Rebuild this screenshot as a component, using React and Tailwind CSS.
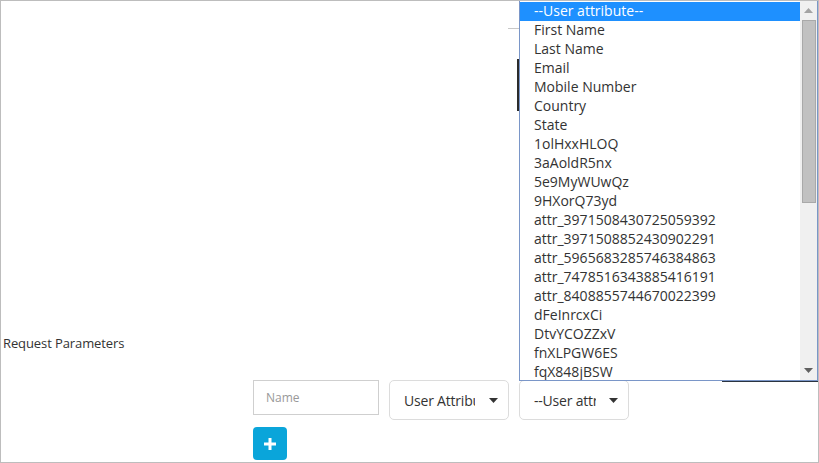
import React from "react";

const items = [
  "First Name",
  "Last Name",
  "Email",
  "Mobile Number",
  "Country",
  "State",
  "1olHxxHLOQ",
  "3aAoldR5nx",
  "5e9MyWUwQz",
  "9HXorQ73yd",
  "attr_3971508430725059392",
  "attr_3971508852430902291",
  "attr_5965683285746384863",
  "attr_7478516343885416191",
  "attr_8408855744670022399",
  "dFeInrcxCi",
  "DtvYCOZZxV",
  "fnXLPGW6ES",
  "fqX848jBSW",
  "gHk29LmQpe",
];

function Caret() {
  return (
    <svg width="9" height="5" viewBox="0 0 9 5" className="shrink-0">
      <path d="M0 0 L9 0 L4.5 5 Z" fill="#333" />
    </svg>
  );
}

export default function App() {
  return (
    <div
      className="relative w-[819px] h-[463px] border border-[#bdbdbd] bg-white overflow-hidden text-[#333]"
      style={{ fontFamily: '"Open Sans", "Noto Sans", sans-serif' }}
    >
      {/* hidden content behind dropdown */}
      <div className="absolute left-[516px] top-[58px] w-[300px] h-[52px] border-l-2 border-[#2b2b2b]" />
      <div className="absolute left-[721px] top-[379px] w-[96px] h-[2px] bg-[#2b3440]" />
      <div className="absolute left-[507px] top-[27px] w-[12px] h-px bg-[#c8c8c8]" />

      <div className="flex flex-col pt-[333px]">
        <div className="pl-[2px] text-[13px] leading-[18px] tracking-[-0.1px]">Request Parameters</div>
        <div className="flex items-start gap-[10px] pl-[252px] mt-[28px]">
          <div className="w-[126px] h-[35px] border border-[#cfcfcf] flex items-center pl-[12px] text-[12px] text-[#999]">
            Name
          </div>
          <div className="w-[120px] h-[40px] border border-[#dcdcdc] rounded-[5px] flex items-center pl-[14px] pr-[10px]">
            <span className="w-[71px] overflow-hidden whitespace-nowrap text-[14px] tracking-[-0.2px]">User Attribute</span>
            <span className="flex-1" />
            <Caret />
          </div>
          <div className="w-[110px] h-[40px] border border-[#dcdcdc] rounded-[5px] flex items-center pl-[14px] pr-[10px]">
            <span className="w-[62px] overflow-hidden whitespace-nowrap text-[14px] tracking-[-0.2px]">--User attribute--</span>
            <span className="flex-1" />
            <Caret />
          </div>
        </div>
        <div className="pl-[252px] mt-[7px]">
          <div className="w-[34px] h-[33px] rounded-[4px] bg-[#0aa5da] flex items-center justify-center">
            <svg width="12" height="12" viewBox="0 0 12 12">
              <path d="M4.5 0 H7.5 V4.5 H12 V7.5 H7.5 V12 H4.5 V7.5 H0 V4.5 H4.5 Z" fill="#fff" />
            </svg>
          </div>
        </div>
      </div>

      {/* open dropdown list */}
      <div className="absolute left-[518px] top-[-1px] w-[299px] h-[381px] border border-[#7a96c8] bg-white flex text-[14px]">
        <div className="flex-1 overflow-hidden pt-px">
          <div className="h-[19px] bg-[#1e90ff] text-white pl-[14px] leading-[17px] whitespace-nowrap">
            --User attribute--
          </div>
          {items.map((t) => (
            <div key={t} className="h-[19px] pl-[14px] leading-[17px] whitespace-nowrap text-[#333]">
              {t}
            </div>
          ))}
        </div>
        <div className="w-[17px] bg-[#f0f0f0] flex flex-col items-center">
          <div className="h-[19px] flex items-center justify-center">
            <svg width="9" height="5" viewBox="0 0 9 5">
              <path d="M0 5 L9 5 L4.5 0 Z" fill="#a3a3a3" />
            </svg>
          </div>
          <div className="w-[14px] h-[183px] bg-[#c1c1c1] border border-[#a9a9a9]" />
          <div className="flex-1" />
          <div className="h-[19px] flex items-center justify-center">
            <svg width="9" height="5" viewBox="0 0 9 5">
              <path d="M0 0 L9 0 L4.5 5 Z" fill="#606060" />
            </svg>
          </div>
        </div>
      </div>
    </div>
  );
}
